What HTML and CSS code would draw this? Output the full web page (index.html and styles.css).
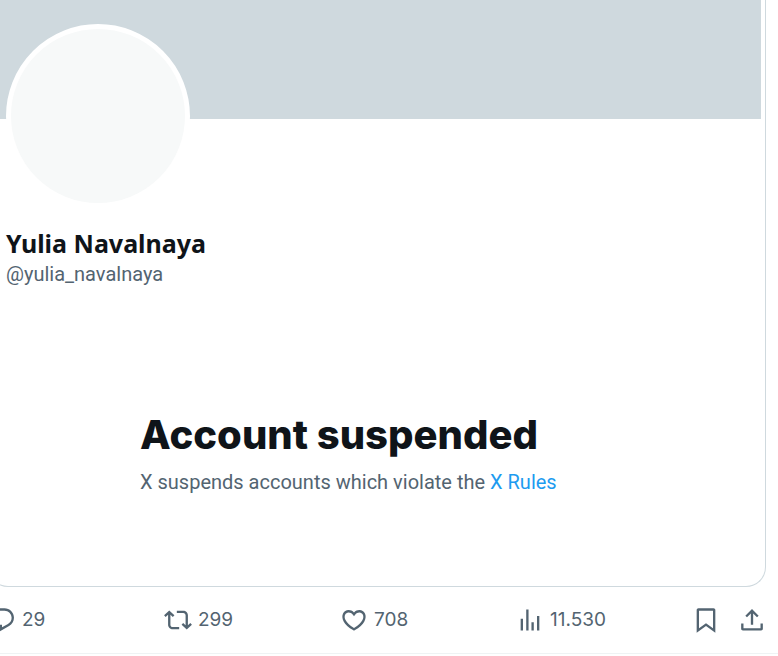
FILE: index.html
```html
<!DOCTYPE html>
<html lang="en">
<head>
<meta charset="utf-8">
<meta name="viewport" content="width=device-width, initial-scale=1">
<title>Yulia Navalnaya</title>
<link rel="stylesheet" href="styles.css">
</head>
<body>
<article class="post">
  <section class="card">
    <div class="banner"></div>
    <div class="avatar"></div>
    <div class="profile">
      <h2 class="name">Yulia Navalnaya</h2>
      <p class="handle">@yulia_navalnaya</p>
    </div>
    <div class="notice">
      <h1 class="title">Account suspended</h1>
      <p class="reason">X suspends accounts which violate the <a href="#rules">X Rules</a></p>
    </div>
  </section>
  <div class="actions">
    <button class="action" type="button" aria-label="29 replies">
      <svg class="icon" viewBox="0 0 24 24" aria-hidden="true"><path d="M1.751 10c0-4.42 3.584-8 8.005-8h4.366c4.49 0 8.129 3.64 8.129 8.13 0 2.96-1.607 5.68-4.196 7.11l-8.054 4.46v-3.69h-.067c-4.49.1-8.183-3.51-8.183-8.01zm8.005-6c-3.317 0-6.005 2.69-6.005 6 0 3.37 2.77 6.08 6.138 6.01l.351-.01h1.761v2.3l5.087-2.81c1.951-1.08 3.163-3.13 3.163-5.36 0-3.39-2.744-6.13-6.129-6.13H9.756z"/></svg>
      <span>29</span>
    </button>
    <button class="action" type="button" aria-label="299 reposts">
      <svg class="icon" viewBox="0 0 24 24" aria-hidden="true"><path d="M4.5 3.88l4.432 4.14-1.364 1.46L5.5 7.55V16c0 1.1.896 2 2 2H13v2H7.5c-2.209 0-4-1.79-4-4V7.55L1.432 9.48.068 8.02 4.5 3.88zM16.5 6H11V4h5.5c2.209 0 4 1.79 4 4v8.45l2.068-1.93 1.364 1.46-4.432 4.14-4.432-4.14 1.364-1.46 2.068 1.93V8c0-1.1-.896-2-2-2z"/></svg>
      <span>299</span>
    </button>
    <button class="action" type="button" aria-label="708 likes">
      <svg class="icon" viewBox="0 0 24 24" aria-hidden="true"><path d="M16.697 5.5c-1.222-.06-2.679.51-3.89 2.16l-.805 1.09-.806-1.09C9.984 6.01 8.526 5.44 7.304 5.5c-1.243.07-2.349.78-2.91 1.91-.552 1.12-.633 2.78.479 4.82 1.074 1.97 3.257 4.27 7.129 6.61 3.87-2.34 6.052-4.64 7.126-6.61 1.111-2.04 1.03-3.7.477-4.82-.561-1.13-1.666-1.84-2.908-1.91zm4.187 7.69c-1.351 2.48-4.001 5.12-8.379 7.67l-.503.3-.504-.3c-4.379-2.55-7.029-5.19-8.382-7.67-1.36-2.5-1.41-4.86-.514-6.67.887-1.79 2.647-2.91 4.601-3.01 1.651-.09 3.368.56 4.798 2.01 1.429-1.45 3.146-2.1 4.796-2.01 1.954.1 3.714 1.22 4.601 3.01.896 1.81.846 4.17-.514 6.67z"/></svg>
      <span>708</span>
    </button>
    <button class="action" type="button" aria-label="11.530 views">
      <svg class="icon" viewBox="0 0 24 24" aria-hidden="true"><path d="M8.75 21V3h2v18h-2zM18 21V8.5h2V21h-2zM4 21l.004-10h2L6 21H4zm9.248 0v-7h2v7h-2z"/></svg>
      <span>11.530</span>
    </button>
    <div class="tools">
      <button class="action" type="button" aria-label="Bookmark">
        <svg class="icon" viewBox="0 0 24 24" aria-hidden="true"><path d="M4 3.5C4 2.67 4.67 2 5.5 2h13c.83 0 1.5.67 1.5 1.5v19.44l-8-5.71-8 5.71V3.5zM6 4v15.06l6-4.29 6 4.29V4H6z"/></svg>
      </button>
      <button class="action" type="button" aria-label="Share">
        <svg class="icon" viewBox="0 0 24 24" aria-hidden="true"><path d="M12 2.59l5.7 5.7-1.41 1.42L13 6.41V16h-2V6.41l-3.3 3.3-1.41-1.42L12 2.59zM21.3 15v4.5c0 .83-.67 1.5-1.5 1.5H4.2c-.83 0-1.5-.67-1.5-1.5V15h2v4h14.6v-4h2z"/></svg>
      </button>
    </div>
  </div>
</article>
</body>
</html>
```
FILE: styles.css
```css
* { box-sizing: border-box; }

body {
  margin: 0;
  overflow-x: hidden;
  background: #fff;
  color: #0f1419;
  font-family: Roboto, "Noto Sans", sans-serif;
}

h1, h2, p { margin: 0; }

.post {
  border-bottom: 1px solid #eff3f4;
}

/* The card bleeds past the left edge of the window. */
.card {
  margin: 0 12px 0 -12px;
  padding: 0 4px 85px 0;
  border: 1px solid #cfd9de;
  border-top: 0;
  border-radius: 0 0 20px 20px;
}

.banner {
  height: 119px;
  background: #cfd9de;
}

.avatar {
  width: 184px;
  height: 184px;
  margin: -95px 0 0 17px;
  border: 5px solid #fff;
  border-radius: 50%;
  background: #f7f9f9;
}

.profile { padding: 19px 17px 0; }

.name {
  font-family: "Noto Sans", sans-serif;
  font-size: 25px;
  font-weight: 700;
  line-height: 32px;
}

.handle {
  color: #536471;
  font-size: 20px;
  line-height: 30px;
}

.notice {
  margin: 118px 0 0 151px;
}

.title {
  font-family: Inter, sans-serif;
  font-size: 40px;
  font-weight: 800;
  line-height: 56px;
}

.reason {
  color: #536471;
  font-size: 20px;
  line-height: 38px;
}

.reason a {
  color: #1d9bf0;
  text-decoration: none;
}

.actions {
  display: grid;
  grid-template-columns: repeat(4, 1fr) auto;
  align-items: center;
  margin: 0 12px 0 -12px;
  padding: 19px 0;
}

.tools {
  display: flex;
  gap: 18px;
}

.action {
  display: flex;
  align-items: center;
  gap: 6px;
  padding: 0;
  border: 0;
  background: none;
  color: #536471;
  font-family: Inter, sans-serif;
  font-size: 19px;
  line-height: 28px;
}

.icon {
  width: 28px;
  height: 28px;
  fill: currentColor;
}
```
